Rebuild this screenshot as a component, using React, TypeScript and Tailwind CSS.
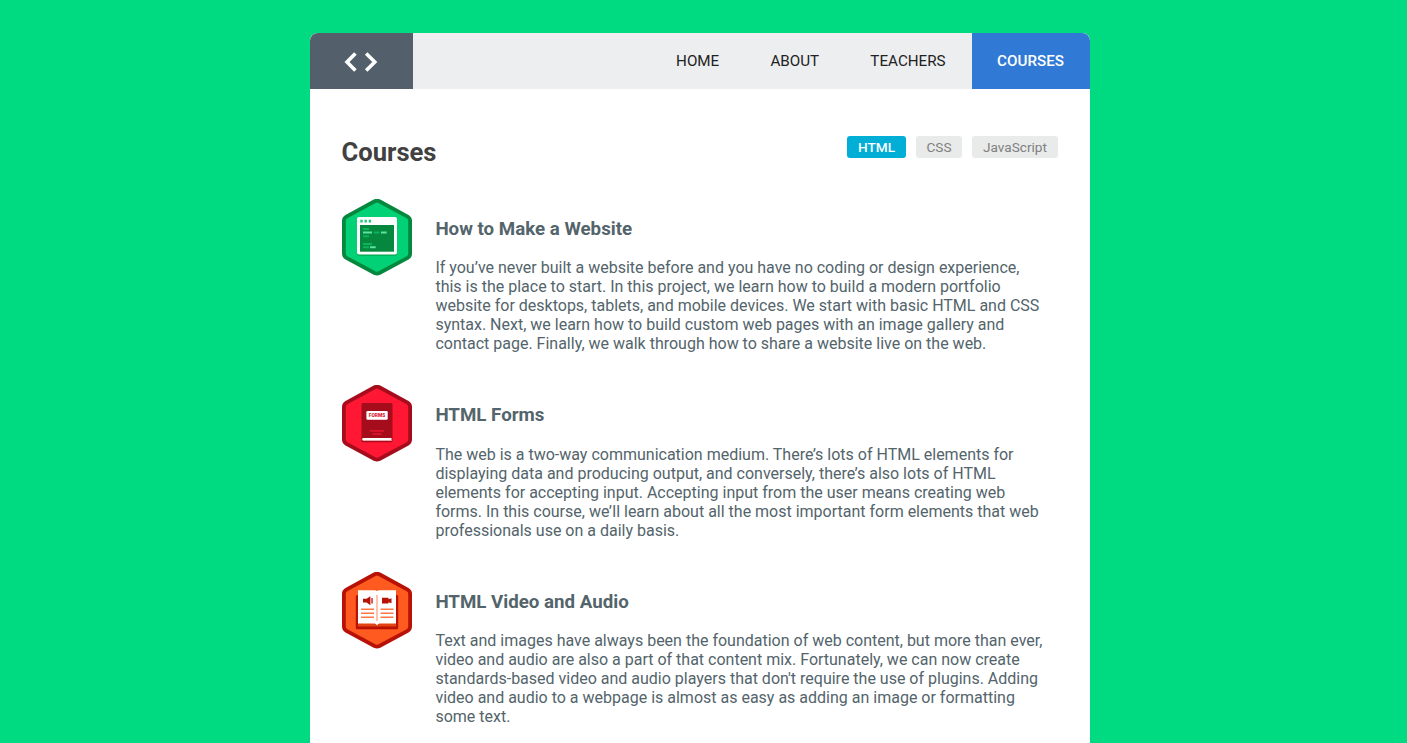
import type { ReactNode } from "react";

function HexBadge({ fill, stroke, children }: { fill: string; stroke: string; children: ReactNode }) {
  return (
    <svg width="70" height="77" viewBox="0 0 70 77" className="block shrink-0">
      <path
        d="M32.6 2.3 Q35 1.1 37.4 2.3 L65.6 17.6 Q68.1 19.1 68.1 21.8 V54.6 Q68.1 57.4 65.6 58.8 L37.4 74 Q35 75.2 32.6 74 L4.4 58.8 Q1.9 57.4 1.9 54.6 V21.8 Q1.9 19.1 4.4 17.6 Z"
        fill={fill}
        stroke={stroke}
        strokeWidth="3.8"
      />
      {children}
    </svg>
  );
}

function WebsiteBadge() {
  return (
    <HexBadge fill="#02d275" stroke="#06873e">
      <rect x="15" y="19.5" width="40" height="37.3" rx="2" fill="#06a652" />
      <rect x="15" y="18" width="40" height="37.4" rx="2" fill="#fff" />
      <path d="M18.3 20.8h2.4v2.6h-2.4zM22.5 20.8h2.4v2.6h-2.4zM26.7 20.8h2.4v2.6h-2.4z" fill="#1cc97a" />
      <rect x="18" y="26" width="34" height="26.7" fill="#06873e" />
      <path d="M21 29h6v2h-6zM32 32.6h5.5v2H32zM21 36.2h6v2h-6zM21 44h9v2h-9zM21 47.3h6v2h-6z" fill="#09b45d" />
      <path d="M21 32.6h9v2h-9zM39 32.6h5.7v2H39zM28 47.3h5.7v2H28z" fill="#5ae3a1" />
    </HexBadge>
  );
}

function FormsBadge() {
  return (
    <HexBadge fill="#ff1733" stroke="#a50d1c">
      <rect x="19.5" y="18" width="31" height="39.3" rx="1.5" fill="#a50d1c" />
      <rect x="24.4" y="26" width="21.3" height="8.8" rx="1.2" fill="#fff" />
      <text
        x="35"
        y="32.2"
        textAnchor="middle"
        textLength="16.4"
        lengthAdjust="spacingAndGlyphs"
        className="font-['Roboto',sans-serif] text-[5px] font-black"
        fill="#e01a30"
      >
        FORMS
      </text>
      <path d="M28 45h14v1.7H28zM30.5 48.2h9v1.7h-9z" fill="#df142c" />
      <path d="M21.5 53h28v2.7h-28a1.3 1.3 0 0 1 0-2.7z" fill="#fff" />
      <path d="M21.5 55h28v1h-28z" fill="#eda3aa" />
    </HexBadge>
  );
}

function VideoBadge() {
  return (
    <HexBadge fill="#ff5a20" stroke="#b81206">
      <rect x="13.8" y="23" width="42.4" height="34.3" rx="1.5" fill="#b81206" />
      <path d="M16 51h38v3.4H16z" fill="#e44313" />
      <path d="M16 18.2h16.5q2 0 2.5 1 .5-1 2.5-1H54v33.3H37.5q-1.5 0-2.5 2-1-2-2.5-2H16z" fill="#fff" />
      <path d="M34 23h2v26h-2z" fill="#ffc2ad" />
      <path d="M21 26.8h3.6l3.8-2.6v9l-3.8-2.6H21zM29.4 26h1.3v5.4h-1.3zM40 25.8h6.5v1.5l3-1v4.9l-3-1v1.4H40z" fill="#b81206" />
      <path d="M19 37.2h13M19 41.2h13M19 45.3h13M38.5 37.2h13M38.5 41.2h13M38.5 45.3h13" stroke="#ff7647" strokeWidth="1.6" />
    </HexBadge>
  );
}

const courses = [
  {
    title: "How to Make a Website",
    badge: <WebsiteBadge />,
    text: "If you’ve never built a website before and you have no coding or design experience, this is the place to start. In this project, we learn how to build a modern portfolio website for desktops, tablets, and mobile devices. We start with basic HTML and CSS syntax. Next, we learn how to build custom web pages with an image gallery and contact page. Finally, we walk through how to share a website live on the web.",
  },
  {
    title: "HTML Forms",
    badge: <FormsBadge />,
    text: "The web is a two-way communication medium. There’s lots of HTML elements for displaying data and producing output, and conversely, there’s also lots of HTML elements for accepting input. Accepting input from the user means creating web forms. In this course, we’ll learn about all the most important form elements that web professionals use on a daily basis.",
  },
  {
    title: "HTML Video and Audio",
    badge: <VideoBadge />,
    text: "Text and images have always been the foundation of web content, but more than ever, video and audio are also a part of that content mix. Fortunately, we can now create standards-based video and audio players that don't require the use of plugins. Adding video and audio to a webpage is almost as easy as adding an image or formatting some text.",
  },
];

export default function App() {
  return (
    <div className="h-[743px] overflow-hidden bg-[#00db82] pt-[33px] pl-[310px] font-['Roboto',sans-serif] text-base">
      <div className="h-[760px] w-[780px] overflow-hidden rounded-t-[8px] bg-white">
        <header className="flex h-14 bg-[#edeef0]">
          <a className="flex w-[103px] items-center justify-center bg-[#53606b]">
            <svg width="34" height="20" viewBox="0 0 34 20" className="mt-px mr-[2px]" fill="none" stroke="#fff" strokeWidth="3.6">
              <path d="M11.4 1.4 3 10l8.4 8.6M22.2 1.4 30.8 10l-8.6 8.6" />
            </svg>
          </a>
          <nav className="ml-auto flex text-[15.2px] leading-[57px] text-[#222]">
            <a className="pr-[25.6px]">HOME</a>
            <a className="px-[25.6px]">ABOUT</a>
            <a className="pr-[26.4px] pl-[25.6px]">TEACHERS</a>
            <a className="h-14 w-[118px] bg-[#307ad5] pr-px text-center font-medium text-white">COURSES</a>
          </nav>
        </header>
        <main className="px-8 pt-[47px]">
          <div className="flex h-[63px] items-start justify-between">
            <h1 className="-ml-[0.5px] text-[25.6px] leading-8 font-bold text-[#414141]">Courses</h1>
            <div className="flex gap-2.5 text-center text-[13.6px] leading-[22px] text-[#7f8080]">
              <a className="h-[22px] w-[59px] rounded-[3px] bg-[#00aed6] font-medium text-white">HTML</a>
              <a className="h-[22px] w-[46px] rounded-[3px] bg-[#e9ebeb]">CSS</a>
              <a className="h-[22px] w-[86px] rounded-[3px] bg-[#e9ebeb]">JavaScript</a>
            </div>
          </div>
          {courses.map((course) => (
            <article key={course.title} className="flex h-[186.45px] gap-[23.4px]">
              {course.badge}
              <div className="w-[610px] pt-[18.7px]">
                <h2 className="text-[18.72px] leading-[22px] font-bold text-[#53646b]">{course.title}</h2>
                <p className="mt-[18.5px] leading-[19px] text-[#53646b]">{course.text}</p>
              </div>
            </article>
          ))}
        </main>
      </div>
    </div>
  );
}
